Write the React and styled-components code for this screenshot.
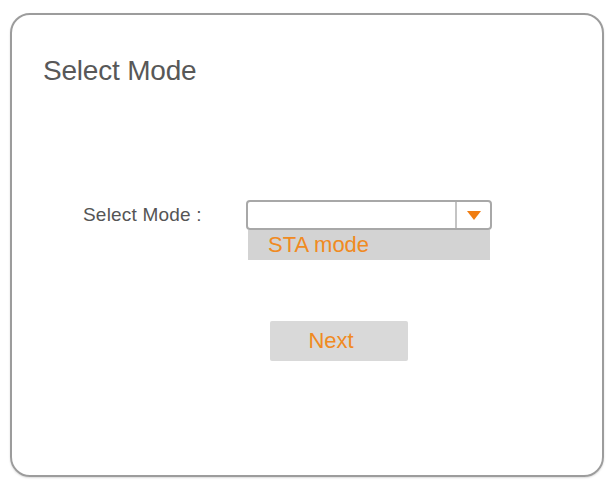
import styled, { createGlobalStyle } from "styled-components";

const Global = createGlobalStyle`
  html, body {
    margin: 0;
    padding: 0;
    background: #ffffff;
  }
  body {
    font-family: "Liberation Sans", Arial, sans-serif;
  }
`;

const Page = styled.div`
  width: 616px;
  height: 486px;
  padding: 13px 12px 9px 10px;
  box-sizing: border-box;
`;

const Card = styled.div`
  height: 100%;
  box-sizing: border-box;
  border: 2px solid #9c9c9c;
  border-radius: 20px;
  box-shadow: 0 1px 2px rgba(0, 0, 0, 0.15);
  padding: 40px 0 0 31px;
  display: flex;
  flex-direction: column;
`;

const Title = styled.h1`
  margin: 0;
  font-size: 28px;
  font-weight: normal;
  color: #585858;
  letter-spacing: -0.2px;
`;

const FormRow = styled.div`
  display: flex;
  align-items: flex-start;
  margin-top: 113px;
`;

const Label = styled.div`
  width: 203px;
  padding-left: 40px;
  box-sizing: border-box;
  height: 30px;
  line-height: 30px;
  font-size: 19px;
  letter-spacing: 0.2px;
  color: #555555;
`;

const SelectWrap = styled.div`
  display: flex;
  flex-direction: column;
  width: 246px;
`;

const SelectBox = styled.div`
  height: 30px;
  box-sizing: border-box;
  border: 2px solid #a8a8a8;
  border-radius: 4px;
  background: #ffffff;
  display: flex;
`;

const SelectValue = styled.div`
  flex: 1;
`;

const ArrowCell = styled.div`
  width: 33px;
  border-left: 2px solid #c4c4c4;
  display: flex;
  align-items: center;
  justify-content: center;
`;

const Option = styled.div`
  margin: 0 2px;
  height: 30px;
  line-height: 30px;
  background: #d3d3d3;
  padding-left: 20px;
  font-size: 22px;
  color: #f08a22;
`;

const ButtonRow = styled.div`
  display: flex;
  justify-content: flex-start;
  padding-left: 227px;
  margin-top: 61px;
`;

const Button = styled.button`
  width: 138px;
  height: 40px;
  border: none;
  border-radius: 2px;
  background: #d9d9d9;
  color: #f08a22;
  font-family: inherit;
  font-size: 22px;
  padding: 0;
  text-indent: -16px;
  cursor: pointer;
`;

export default function App() {
  return (
    <>
      <Global />
      <Page>
        <Card>
          <Title>Select Mode</Title>
          <FormRow>
            <Label>Select Mode :</Label>
            <SelectWrap>
              <SelectBox>
                <SelectValue />
                <ArrowCell>
                  <svg width="14" height="9" viewBox="0 0 14 9">
                    <polygon points="0,0 14,0 7,9" fill="#f07d12" />
                  </svg>
                </ArrowCell>
              </SelectBox>
              <Option>STA mode</Option>
            </SelectWrap>
          </FormRow>
          <ButtonRow>
            <Button>Next</Button>
          </ButtonRow>
        </Card>
      </Page>
    </>
  );
}
